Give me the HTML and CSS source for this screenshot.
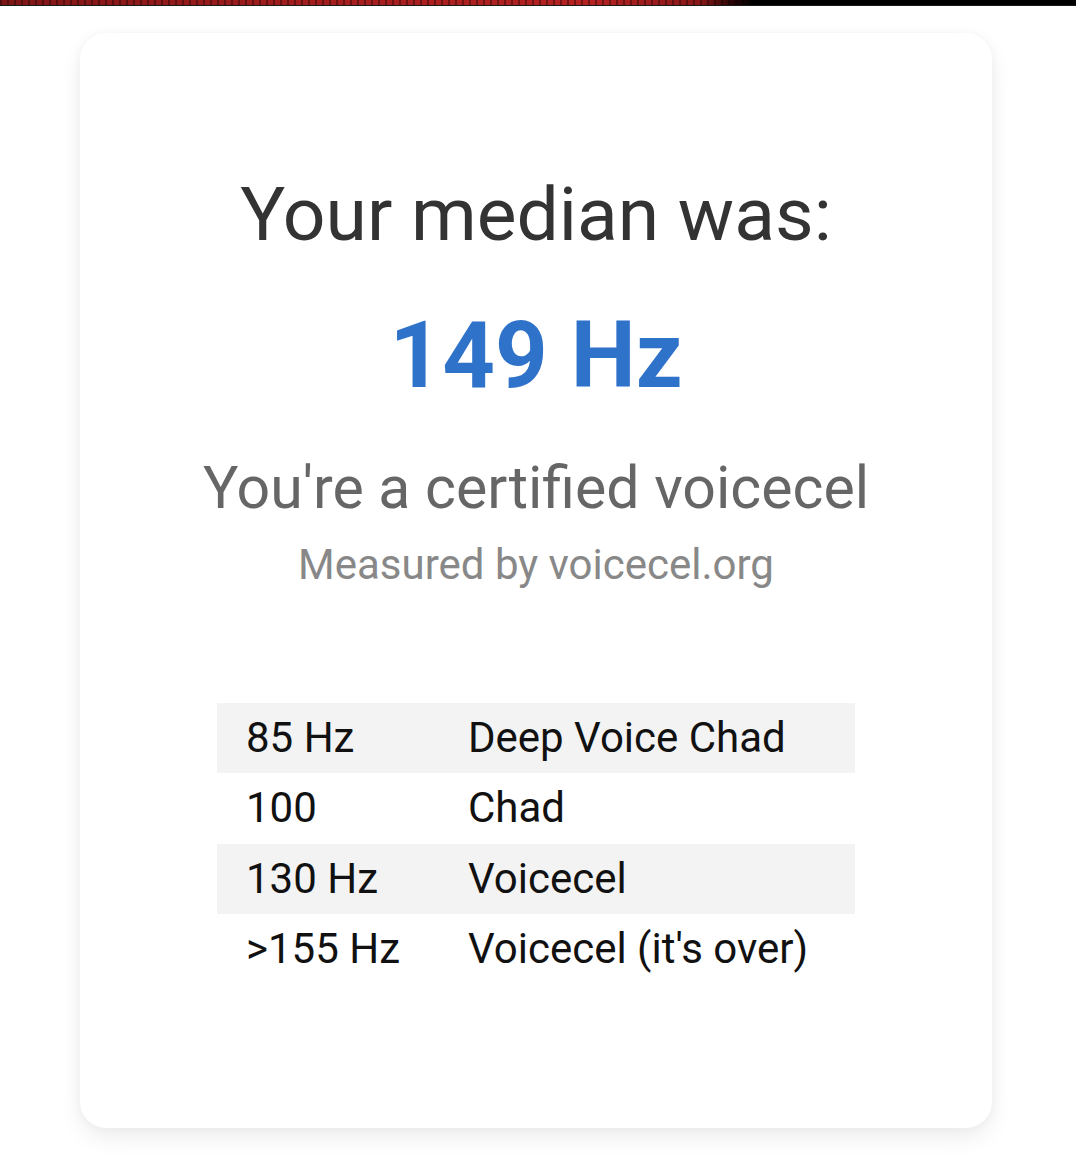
FILE: index.html
```html
<!DOCTYPE html>
<html lang="en">
<head>
<meta charset="utf-8">
<title>Voicecel result</title>
<link rel="stylesheet" href="styles.css">
</head>
<body>
<div class="topbar"></div>
<main class="card">
  <h1 class="heading">Your median was:</h1>
  <div class="value">149 Hz</div>
  <div class="verdict">You're a certified voicecel</div>
  <div class="credit">Measured by voicecel.org</div>
  <table class="scale">
    <tbody>
      <tr class="alt"><td class="hz">85 Hz</td><td>Deep Voice Chad</td></tr>
      <tr><td class="hz">100</td><td>Chad</td></tr>
      <tr class="alt"><td class="hz">130 Hz</td><td>Voicecel</td></tr>
      <tr><td class="hz">&gt;155 Hz</td><td>Voicecel (it's over)</td></tr>
    </tbody>
  </table>
</main>
</body>
</html>
```

FILE: styles.css
```css
html, body {
  margin: 0;
  padding: 0;
  background: #ffffff;
}
body {
  font-family: Roboto, "Noto Sans", "Liberation Sans", sans-serif;
  width: 1076px;
  height: 1167px;
  overflow: hidden;
}
.topbar {
  height: 5px;
  border-bottom: 1px solid #1a1a1a;
  background:
    repeating-linear-gradient(to right, rgba(0,0,0,0.35) 0 2px, transparent 2px 7px),
    linear-gradient(to right, #7e1616 0, #a51e1e 30%, #b52222 55%, #8a1818 65%, #2a0505 68%, #000 70%, #000 100%);
}
.card {
  box-sizing: border-box;
  width: 912px;
  margin: 27px 0 0 80px;
  padding: 136px 0 144px;
  background: #fff;
  border-radius: 26px;
  box-shadow: 0 10px 22px rgba(0,0,0,0.07), 0 0 10px rgba(0,0,0,0.04);
  display: flex;
  flex-direction: column;
  align-items: center;
  text-align: center;
}
.heading {
  margin: 0;
  font-size: 75px;
  line-height: 90px;
  font-weight: 400;
  color: #333333;
}
.value {
  margin-top: 42px;
  font-size: 92px;
  line-height: 110px;
  font-weight: 700;
  color: #2f72c9;
}
.verdict {
  margin-top: 40px;
  font-size: 59px;
  line-height: 74px;
  color: #666666;
}
.credit {
  margin-top: 17px;
  font-size: 42px;
  line-height: 46px;
  color: #888888;
}
.scale {
  margin-top: 115px;
  width: 638px;
  border-collapse: collapse;
  text-align: left;
  font-size: 42px;
  color: #111111;
}
.scale td {
  height: 70.25px;
  line-height: 70.25px;
  padding: 0;
  white-space: nowrap;
}
.scale td.hz {
  width: 222px;
  padding-left: 29px;
}
.scale tr.alt {
  background: #f3f3f3;
}
```
